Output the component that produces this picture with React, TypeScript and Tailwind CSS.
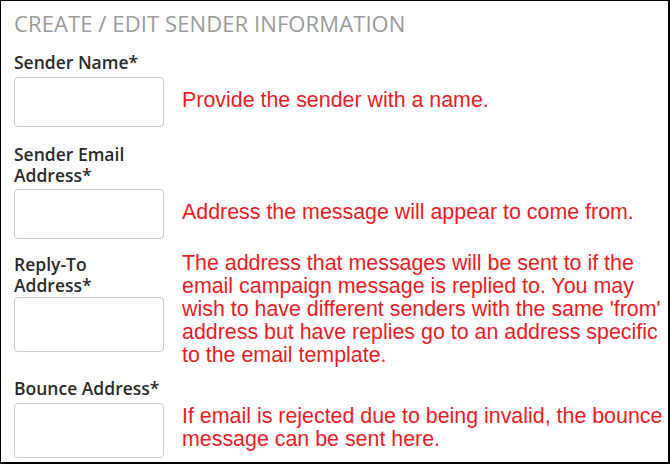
const labelCls =
  "whitespace-nowrap text-[17.5px] leading-[21px] font-semibold text-[#2b2b2b] [font-family:'Open_Sans',sans-serif]";
const noteCls =
  "text-[21.4px] leading-[23px] text-[#ec1c24] [font-family:'Liberation_Sans',Arial,sans-serif]";
const inputCls =
  "w-[150px] rounded-[4px] border border-[#cccccc] bg-white outline-none";

function Field({ label, h }: { label: React.ReactNode; h: string }) {
  return (
    <div className="w-[150px] shrink-0 flex flex-col">
      <label className={labelCls}>{label}</label>
      <input type="text" className={`${inputCls} ${h}`} />
    </div>
  );
}

export default function App() {
  return (
    <div className="w-[670px] h-[464px] overflow-hidden bg-white border-l border-t border-r-2 border-b-2 border-black pl-[13px]">
      <h1 className="pt-[7px] text-[22px] leading-[30px] tracking-[0.1px] text-[#9b9b9b] font-normal [font-family:'Open_Sans',sans-serif]">
        CREATE / EDIT SENDER INFORMATION
      </h1>

      {/* sender name */}
      <div className="mt-[14px] flex gap-[18px]">
        <Field label="Sender Name*" h="mt-[4px] h-[50px]" />
        <p className={`${noteCls} pt-[37px]`}>Provide the sender with a name.</p>
      </div>

      {/* sender email */}
      <div className="mt-[17px] flex gap-[18px]">
        <Field
          label={
            <>
              Sender Email
              <br />
              Address*
            </>
          }
          h="mt-[3px] h-[50px]"
        />
        <p className={`${noteCls} pt-[57px]`}>
          Address the message will appear to come from.
        </p>
      </div>

      {/* reply-to */}
      <div className="mt-[15px] flex gap-[18px]">
        <Field
          label={
            <>
              Reply-To
              <br />
              Address*
            </>
          }
          h="mt-[1px] h-[55px]"
        />
        <p className={`${noteCls} -mt-[2px] w-[486px]`}>
          The address that messages will be sent to if the email campaign
          message is replied to. You may wish to have different senders with
          the same 'from' address but have replies go to an address specific
          to the email template.
        </p>
      </div>

      {/* bounce */}
      <div className="mt-[11px] flex gap-[18px]">
        <Field label="Bounce Address*" h="mt-[4px] h-[55px]" />
        <p className={`${noteCls} pt-[27px] w-[486px]`}>
          If email is rejected due to being invalid, the bounce message can be
          sent here.
        </p>
      </div>
    </div>
  );
}
